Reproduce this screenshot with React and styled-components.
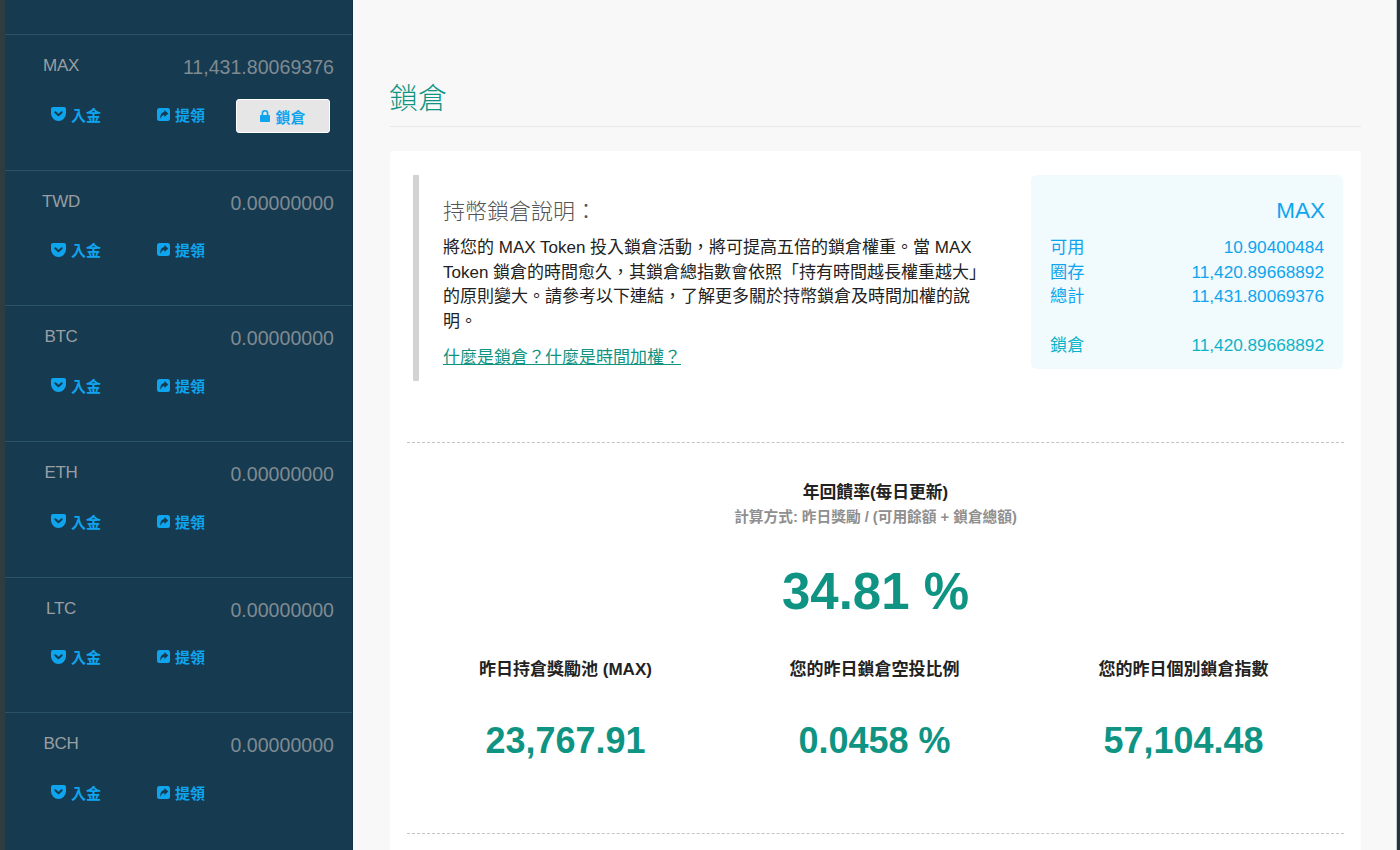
import React from "react";
import styled, { createGlobalStyle } from "styled-components";

const Global = createGlobalStyle`
  html, body { margin: 0; padding: 0; height: 850px; overflow: hidden; background: #f8f8f8; }
  * { box-sizing: border-box; }
  #root { height: 850px; }
`;
const FONT = `"Liberation Sans", "Noto Sans CJK TC", sans-serif`;
const GREEN = "#0f9483";
const BLUE = "#0ea5ee";
const NAVY = "#163a4f";

const Page = styled.div`
  display: flex; width: 1400px; height: 850px; overflow: hidden;
  font-family: ${FONT}; background: #f8f8f8;
`;
const LeftEdge = styled.div`width: 5px; flex: none; background: #2f3c40;`;
const Sidebar = styled.aside`
  width: 348px; flex: none; background: ${NAVY}; padding-top: 34px;
  border-right: 1px solid #123246; overflow: hidden;
`;
const Row = styled.div`
  height: 135.7px; border-top: 1px solid #28536a; padding: 20px 18px 0 37px;
`;
const RowHead = styled.div`display: flex; justify-content: space-between; align-items: baseline;`;
const Coin = styled.span`
  font-size: 17px; color: #9a9fa3; width: 38px; text-align: center; letter-spacing: -0.3px;
  position: relative; top: -2px;
`;
const Amount = styled.span`font-size: 19.6px; font-weight: 300; color: #7f8a92; position: relative; top: 1px;`;
const Actions = styled.div`
  display: flex; align-items: center; margin-top: 19px; height: 34px; padding-left: 9px;
`;
const Action = styled.a`
  display: flex; align-items: center; gap: 5px; width: ${p => p.$w}px; flex: none;
  font-size: 15px; font-weight: 700; color: ${BLUE};
`;
const LockButton = styled.button`
  display: flex; align-items: center; justify-content: center; gap: 5px;
  width: 94px; height: 34px; margin-top: 4px; border: 1px solid #fff; border-radius: 3px;
  background: #e6e6e6; color: ${BLUE}; font: 700 15px ${FONT}; padding: 0;
`;
const Main = styled.main`flex: 1; min-width: 0; padding: 78px 35px 0 37px; background: #f8f8f8;`;
const RightEdge = styled.div`width: 4px; flex: none; background: #24343c; border-left: 1px solid #c8c8c8;`;
const Title = styled.h1`
  margin: 0; height: 49px; border-bottom: 1px solid #e8e8e8; text-indent: -1px;
  font-size: 29px; line-height: 43px; font-weight: 300; color: ${GREEN};
`;
const Card = styled.section`
  margin-top: 24px; background: #fff; border-radius: 3px; height: 760px; padding: 24px 17px 0;
`;
const Intro = styled.div`display: flex; justify-content: space-between; height: 206px; padding-left: 6px;`;
const Note = styled.div`
  width: 590px; height: 206px; border-left: 6px solid #d3d3d3; padding: 21px 0 0 24px;
`;
const NoteTitle = styled.h2`margin: 0 0 8px; font-size: 22px; line-height: 32px; font-weight: 300; color: #555;`;
const NoteText = styled.p`margin: 0; font-size: 17px; line-height: 24.5px; color: #222; width: 540px;`;
const NoteLink = styled.a`
  display: inline-block; margin-top: 12px; font-size: 17px; line-height: 24px;
  color: ${GREEN}; text-decoration: underline;
`;
const Balance = styled.div`
  width: 312px; height: 194px; background: #f1fafd; border-radius: 6px;
  padding: 20px 19px 0; color: ${BLUE}; margin-right: 1px;
`;
const BalanceCoin = styled.div`
  text-align: right; font-size: 22.5px; line-height: 32px; font-weight: 300; margin: 0 -1px 0 0;
`;
const BalanceList = styled.div`padding-top: 8px;`;
const BalanceRow = styled.div`
  display: flex; justify-content: space-between; font-size: 17.2px; line-height: 24.5px;
  color: ${p => (p.$lock ? "#0db4c8" : BLUE)};
  margin-top: ${p => (p.$lock ? "24px" : "0")};
`;
const Dash = styled.hr`
  margin: ${p => p.$top}px 0 0; border: 0; border-top: 1px dashed #c4c4c4; width: 937px;
`;
const Rate = styled.div`text-align: center; padding-top: 38px;`;
const RateLabel = styled.div`font-size: 16.8px; line-height: 24px; font-weight: 700; color: #222;`;
const RateHint = styled.div`margin-top: 1px; font-size: 14.7px; line-height: 22px; font-weight: 700; color: #8f8f8f;`;
const RateValue = styled.div`
  margin-top: 31px; font-size: 51px; line-height: 66px; font-weight: 700; color: ${GREEN};
`;
const Stats = styled.div`
  display: grid; grid-template-columns: repeat(3, 309px); margin: 33px 0 0 4px; text-align: center;
`;
const StatLabel = styled.div`font-size: 17px; line-height: 24px; font-weight: 700; color: #222;`;
const StatValue = styled.div`margin-top: 34px; font-size: 36px; line-height: 50px; font-weight: 700; color: ${GREEN};`;

const Shield = () => (
  <svg width="15" height="14" viewBox="0 0 15 14">
    <path fill={BLUE} d="M2 0h11a2 2 0 0 1 2 2v4.5a7.5 7.5 0 0 1-15 0V2a2 2 0 0 1 2-2z" />
    <path fill="none" stroke={NAVY} strokeWidth="2" strokeLinecap="round" strokeLinejoin="round" d="M4.3 5.2l3.2 3 3.2-3" />
  </svg>
);
const Share = () => (
  <svg width="13" height="13" viewBox="0 0 13 13">
    <rect width="13" height="13" rx="2.5" fill={BLUE} />
    <path fill={NAVY} d="M7.4 2l3.9 3.5-3.9 3.5V7C5.4 7 4.1 8.2 3.7 11 2.7 7.4 4.4 4.4 7.4 4.1z" />
  </svg>
);
const Lock = () => (
  <svg width="10" height="12" viewBox="0 0 10 12">
    <rect y="5" width="10" height="7" rx="1" fill={BLUE} />
    <path fill="none" stroke={BLUE} strokeWidth="1.6" d="M2.4 5.5V3.4a2.6 2.6 0 0 1 5.2 0v2.1" />
  </svg>
);

const coins = [
  ["MAX", "11,431.80069376", true],
  ["TWD", "0.00000000"],
  ["BTC", "0.00000000"],
  ["ETH", "0.00000000"],
  ["LTC", "0.00000000"],
  ["BCH", "0.00000000"],
];
const balances = [
  ["可用", "10.90400484"],
  ["圈存", "11,420.89668892"],
  ["總計", "11,431.80069376"],
];
const stats = [
  ["昨日持倉獎勵池 (MAX)", "23,767.91"],
  ["您的昨日鎖倉空投比例", "0.0458 %"],
  ["您的昨日個別鎖倉指數", "57,104.48"],
];

export default function App() {
  return (
    <Page>
      <Global />
      <LeftEdge />
      <Sidebar>
        {coins.map(([c, a, lock]) => (
          <Row key={c}>
            <RowHead><Coin>{c}</Coin><Amount>{a}</Amount></RowHead>
            <Actions>
              <Action $w={106}><Shield />入金</Action>
              <Action $w={79}><Share />提領</Action>
              {lock && <LockButton><Lock />鎖倉</LockButton>}
            </Actions>
          </Row>
        ))}
      </Sidebar>
      <Main>
        <Title>鎖倉</Title>
        <Card>
          <Intro>
            <Note>
              <NoteTitle>持幣鎖倉說明：</NoteTitle>
              <NoteText>將您的 MAX Token 投入鎖倉活動，將可提高五倍的鎖倉權重。當 MAX Token 鎖倉的時間愈久，其鎖倉總指數會依照「持有時間越長權重越大」的原則變大。請參考以下連結，了解更多關於持幣鎖倉及時間加權的說明。</NoteText>
              <NoteLink>什麼是鎖倉？什麼是時間加權？</NoteLink>
            </Note>
            <Balance>
              <BalanceCoin>MAX</BalanceCoin>
              <BalanceList>
                {balances.map(([k, v]) => (
                  <BalanceRow key={k}><span>{k}</span><span>{v}</span></BalanceRow>
                ))}
                <BalanceRow $lock><span>鎖倉</span><span>11,420.89668892</span></BalanceRow>
              </BalanceList>
            </Balance>
          </Intro>
          <Dash $top={61} />
          <Rate>
            <RateLabel>年回饋率(每日更新)</RateLabel>
            <RateHint>計算方式: 昨日獎勵 / (可用餘額 + 鎖倉總額)</RateHint>
            <RateValue>34.81 %</RateValue>
          </Rate>
          <Stats>
            {stats.map(([l, v]) => (
              <div key={l}>
                <StatLabel>{l}</StatLabel>
                <StatValue>{v}</StatValue>
              </div>
            ))}
          </Stats>
          <Dash $top={67} />
        </Card>
      </Main>
      <RightEdge />
    </Page>
  );
}
